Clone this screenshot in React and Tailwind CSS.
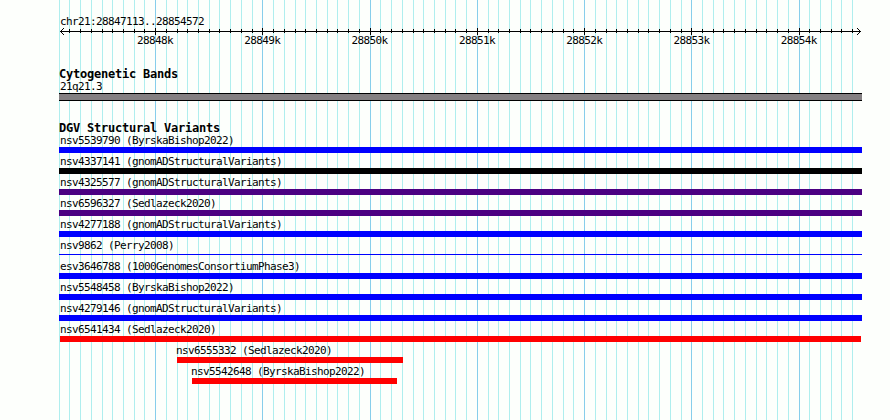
/**
 * Genome browser panel: ruler, cytogenetic band and structural variant tracks
 */

const WIDTH = 890
const HEIGHT = 420

// 100 bp grid positions, in panel pixels
const GRID = [
  59, 69, 80, 91, 102, 112, 123, 134, 144, 155, 166, 177, 187, 198, 209, 219, 230, 241, 252,
  262, 273, 284, 295, 305, 316, 327, 337, 348, 359, 370, 380, 391, 402, 413, 423, 434, 445, 455,
  466, 477, 488, 498, 509, 520, 530, 541, 552, 563, 573, 584, 595, 606, 616, 627, 638, 648, 659,
  670, 681, 691, 702, 713, 723, 734, 745, 756, 766, 777, 788, 799, 809, 820, 831, 841, 852,
]

const MAJOR = [
  { x: 155, label: '28848k' },
  { x: 262, label: '28849k' },
  { x: 370, label: '28850k' },
  { x: 477, label: '28851k' },
  { x: 584, label: '28852k' },
  { x: 691, label: '28853k' },
  { x: 799, label: '28854k' },
]

const isMajor = (x) => MAJOR.some((m) => m.x === x)

const VARIANTS = [
  { name: 'nsv5539790 (ByrskaBishop2022)', bar: 'w-[803px] h-1.5 bg-[#0000ff]' },
  { name: 'nsv4337141 (gnomADStructuralVariants)', bar: 'w-[803px] h-1.5 bg-black' },
  { name: 'nsv4325577 (gnomADStructuralVariants)', bar: 'w-[803px] h-1.5 bg-[#4b0082]' },
  { name: 'nsv6596327 (Sedlazeck2020)', bar: 'w-[803px] h-1.5 bg-[#4b0082]' },
  { name: 'nsv4277188 (gnomADStructuralVariants)', bar: 'w-[803px] h-1.5 bg-[#0000ff]' },
  { name: 'nsv9862 (Perry2008)', bar: 'w-[803px] h-px mt-0.5 bg-[#0000ff]' },
  { name: 'esv3646788 (1000GenomesConsortiumPhase3)', bar: 'w-[803px] h-1.5 bg-[#0000ff]' },
  { name: 'nsv5548458 (ByrskaBishop2022)', bar: 'w-[803px] h-1.5 bg-[#0000ff]' },
  { name: 'nsv4279146 (gnomADStructuralVariants)', bar: 'w-[803px] h-1.5 bg-[#0000ff]' },
  { name: 'nsv6541434 (Sedlazeck2020)', bar: 'ml-px w-[801px] h-1.5 bg-[#ff0000]' },
  { name: 'nsv6555332 (Sedlazeck2020)', row: 'pl-[118px]', text: '-ml-px', bar: 'w-[226px] h-1.5 bg-[#ff0000]' },
  { name: 'nsv5542648 (ByrskaBishop2022)', row: 'pl-[133px]', text: '-ml-px', bar: 'w-[205px] h-1.5 bg-[#ff0000]' },
]

function Label({ className = '', children }) {
  return (
    <div className={`h-3 text-[11px] leading-[12px] tracking-[-0.62px] whitespace-pre ${className}`}>
      {children}
    </div>
  )
}

function TrackTitle({ children }) {
  return (
    <h2 className="mb-px h-3 text-[12px] leading-[12px] font-bold tracking-[-0.22px] whitespace-pre">
      {children}
    </h2>
  )
}

function GridLines() {
  return (
    <svg className="absolute inset-0" width={WIDTH} height={HEIGHT} shapeRendering="crispEdges">
      {GRID.map((x) => (
        <rect key={x} x={x} y="0" width="1" height={HEIGHT} fill={isMajor(x) ? '#87ceeb' : '#afeeee'} />
      ))}
    </svg>
  )
}

function Ruler() {
  return (
    <svg className="block -ml-[59px]" width={WIDTH} height="8" shapeRendering="crispEdges">
      <rect x="60" y="3" width="801" height="1" />
      {GRID.slice(1).map((x) => (
        <rect key={x} x={x} y={isMajor(x) ? 0 : 1} width="1" height={isMajor(x) ? 7 : 4} />
      ))}
      {/* arrow heads */}
      {[1, 2, 3].map((d) => (
        <g key={d}>
          <rect x={60 + d} y={3 - d} width="1" height="1" />
          <rect x={60 + d} y={3 + d} width="1" height="1" />
          <rect x={860 - d} y={3 - d} width="1" height="1" />
          <rect x={860 - d} y={3 + d} width="1" height="1" />
        </g>
      ))}
    </svg>
  )
}

export default function App() {
  return (
    <div className="relative h-[420px] w-[890px] overflow-hidden bg-[#fdfffc] font-['DejaVu_Sans_Mono',monospace] text-black">
      <GridLines />
      <main className="relative pt-4 pl-[59px]">
        <Label className="ml-px">chr21:28847113..28854572</Label>
        <Ruler />
        <div className="-mt-px ml-[78px] flex">
          {MAJOR.map((m) => (
            <Label key={m.label} className="w-[107.3px]">{m.label}</Label>
          ))}
        </div>

        <section className="mt-[21px]">
          <TrackTitle>Cytogenetic Bands</TrackTitle>
          <Label className="ml-px">21q21.3</Label>
          <div className="h-2 w-[803px] border-y border-black bg-[#848082]" />
        </section>

        <section className="mt-[21px]">
          <TrackTitle>DGV Structural Variants</TrackTitle>
          {VARIANTS.map((v) => (
            <div key={v.name} className={`h-[21px] ${v.row || ''}`}>
              <Label className={v.text || 'ml-px'}>{v.name}</Label>
              <div className={v.bar} />
            </div>
          ))}
        </section>
      </main>
    </div>
  )
}
